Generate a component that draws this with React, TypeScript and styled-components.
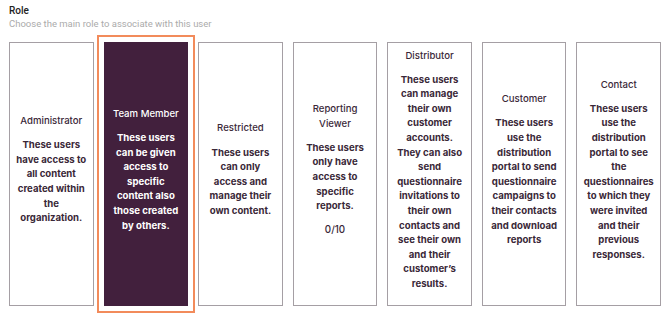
import React from "react";
import styled, { createGlobalStyle } from "styled-components";

const Global = createGlobalStyle`
  html, body { margin: 0; padding: 0; background: #ffffff; }
  body { font-family: Roboto, "Liberation Sans", sans-serif; }
`;

const Page = styled.div`
  padding: 4px 9px 0 9px;
  width: 670px;
  min-height: 317px;
  box-sizing: border-box;
`;

const Label = styled.div`
  font-family: Roboto, sans-serif;
  font-size: 10px;
  font-weight: 500;
  color: #222222;
  line-height: 13px;
`;

const Hint = styled.div`
  font-family: Roboto, sans-serif;
  font-size: 9.5px;
  color: #ababab;
  line-height: 12px;
  margin-top: 1px;
`;

const Cards = styled.div`
  display: flex;
  gap: 10px;
  margin-top: 12px;
`;

const Card = styled.div<{ $selected?: boolean }>`
  width: 85px;
  height: 264px;
  box-sizing: border-box;
  border: 1px solid ${(p) => (p.$selected ? "#42203d" : "#a59fa4")};
  background: ${(p) => (p.$selected ? "#42203d" : "#ffffff")};
  color: ${(p) => (p.$selected ? "#ffffff" : "#3a2838")};
  outline: ${(p) => (p.$selected ? "2px solid #f28b5b" : "none")};
  outline-offset: 5px;
  display: flex;
  flex-direction: column;
  align-items: center;
  justify-content: center;
  text-align: center;
  padding: 0 2px 8px 2px;
  font-family: Inter, "Noto Sans", sans-serif;
  white-space: nowrap;
  cursor: pointer;
`;

const Title = styled.div`
  font-size: 9.6px;
  font-weight: 500;
  line-height: 14.6px;
`;

const Body = styled.div`
  font-size: 9.6px;
  font-weight: 650;
  line-height: 14.6px;
  margin-top: 9.5px;
`;

const Count = styled.div`
  font-size: 9.8px;
  font-weight: 500;
  line-height: 14.6px;
  margin-top: 9.5px;
`;

type Role = { title: string[]; body: string[]; count?: string };

const roles: Role[] = [
  {
    title: ["Administrator"],
    body: ["These users", "have access to", "all content", "created within", "the", "organization."],
  },
  {
    title: ["Team Member"],
    body: ["These users", "can be given", "access to", "specific", "content also", "those created", "by others."],
  },
  {
    title: ["Restricted"],
    body: ["These users", "can only", "access and", "manage their", "own content."],
  },
  {
    title: ["Reporting", "Viewer"],
    body: ["These users", "only have", "access to", "specific", "reports."],
    count: "0/10",
  },
  {
    title: ["Distributor"],
    body: [
      "These users",
      "can manage",
      "their own",
      "customer",
      "accounts.",
      "They can also",
      "send",
      "questionnaire",
      "invitations to",
      "their own",
      "contacts and",
      "see their own",
      "and their",
      "customer’s",
      "results.",
    ],
  },
  {
    title: ["Customer"],
    body: [
      "These users",
      "use the",
      "distribution",
      "portal to send",
      "questionnaire",
      "campaigns to",
      "their contacts",
      "and download",
      "reports",
    ],
  },
  {
    title: ["Contact"],
    body: [
      "These users",
      "use the",
      "distribution",
      "portal to see",
      "the",
      "questionnaires",
      "to which they",
      "were invited",
      "and their",
      "previous",
      "responses.",
    ],
  },
];

function Lines({ lines }: { lines: string[] }) {
  return (
    <>
      {lines.map((l, i) => (
        <React.Fragment key={i}>
          {i > 0 && <br />}
          {l}
        </React.Fragment>
      ))}
    </>
  );
}

export default function App() {
  return (
    <Page>
      <Global />
      <Label>Role</Label>
      <Hint>Choose the main role to associate with this user</Hint>
      <Cards>
        {roles.map((r, i) => (
          <Card key={r.title.join(" ")} $selected={i === 1}>
            <Title>
              <Lines lines={r.title} />
            </Title>
            <Body>
              <Lines lines={r.body} />
            </Body>
            {r.count && <Count>{r.count}</Count>}
          </Card>
        ))}
      </Cards>
    </Page>
  );
}
